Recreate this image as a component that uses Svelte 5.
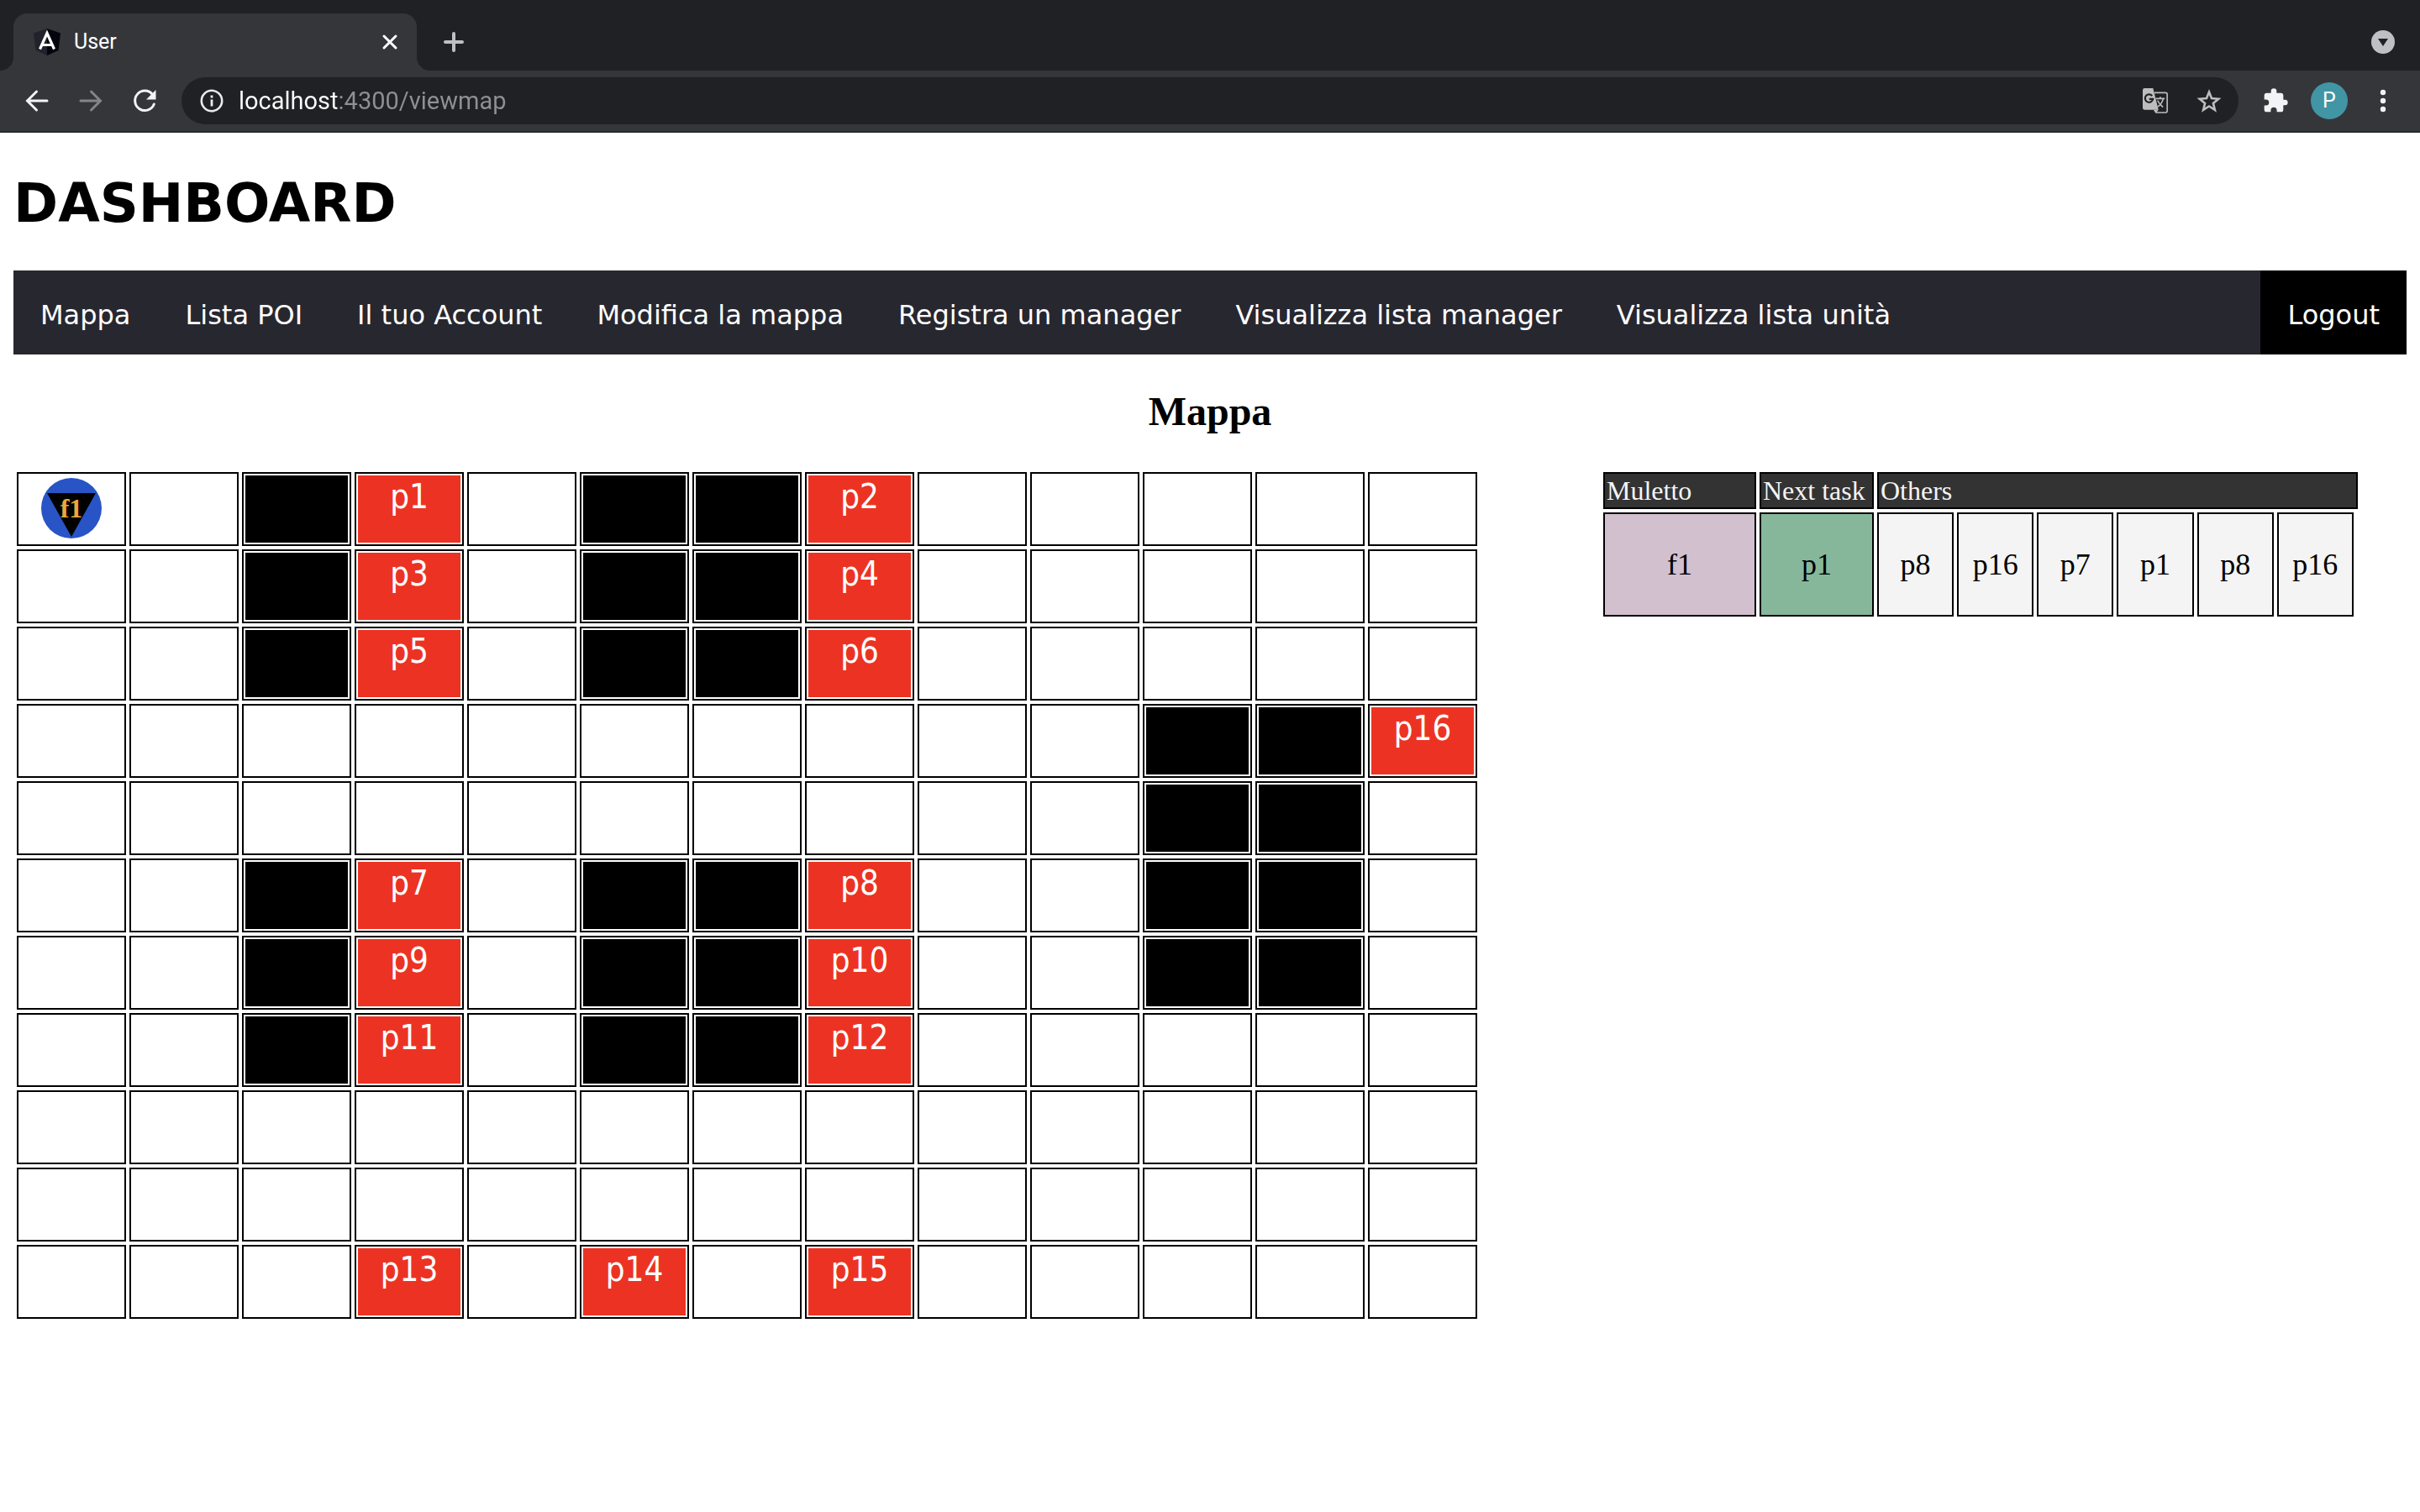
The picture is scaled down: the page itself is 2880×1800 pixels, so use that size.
<script lang="ts">
  const links = [
    'Mappa',
    'Lista POI',
    'Il tuo Account',
    'Modifica la mappa',
    'Registra un manager',
    'Visualizza lista manager',
    'Visualizza lista unità'
  ];

  // '.' free cell, '#' obstacle, '@' forklift, anything else is a POI label
  const map: string[][] = [
    '@ . # p1 . # # p2 . . . . .',
    '. . # p3 . # # p4 . . . . .',
    '. . # p5 . # # p6 . . . . .',
    '. . . . . . . . . . # # p16',
    '. . . . . . . . . . # # .',
    '. . # p7 . # # p8 . . # # .',
    '. . # p9 . # # p10 . . # # .',
    '. . # p11 . # # p12 . . . . .',
    '. . . . . . . . . . . . .',
    '. . . . . . . . . . . . .',
    '. . . p13 . p14 . p15 . . . . .'
  ].map((row) => row.split(' '));

  const others = ['p8', 'p16', 'p7', 'p1', 'p8', 'p16'];
  let address = $state('localhost:4300/viewmap');
</script>

<header class="browser">
  <div class="tabstrip">
    <div class="tab">
      <svg class="favicon" viewBox="0 0 32 32" aria-hidden="true">
        <path d="M16 0 0 5.500 2.500 26 16 32z" fill="#20232b" />
        <path d="M16 0 32 5.500 29.500 26 16 32z" fill="#02040e" />
        <path d="M7.500 24.500 16 5.500l8.500 19M10.500 19.500h11" fill="none" stroke="#fff" stroke-width="3.200" />
      </svg>
      <span class="tab-title">User</span>
      <button class="icon" aria-label="Close tab">
        <svg viewBox="0 0 20 20"><path d="m3 3 14 14M17 3 3 17" fill="none" stroke="#fff" stroke-width="3" stroke-linecap="round" /></svg>
      </button>
    </div>
    <button class="icon new-tab" aria-label="New tab">
      <svg viewBox="0 0 24 24"><path d="M12 2v20M2 12h20" fill="none" stroke="#bdc1c6" stroke-width="4" stroke-linecap="round" /></svg>
    </button>
    <button class="icon tab-search" aria-label="Search tabs">
      <svg viewBox="0 0 28 28"><circle cx="14" cy="14" r="14" fill="#bdc1c6" /><path d="M8 10h12l-6 9z" fill="#202124" /></svg>
    </button>
  </div>
  <div class="toolbar">
    <div class="history">
      <button class="icon" aria-label="Back">
        <svg viewBox="0 0 32 32"><path d="M28 16H5M15.500 5 4.500 16l11 11" fill="none" stroke="#f1f3f4" stroke-width="3" stroke-linecap="round" /></svg>
      </button>
      <button class="icon" aria-label="Forward">
        <svg viewBox="0 0 32 32"><path d="M4 16h23M16.500 5l11 11-11 11" fill="none" stroke="#848589" stroke-width="3" stroke-linecap="round" /></svg>
      </button>
      <button class="icon" aria-label="Reload">
        <svg viewBox="0 0 32 32"><path d="M25.500 8.500A11.700 11.700 0 1 0 27.300 20" fill="none" stroke="#f1f3f4" stroke-width="3" stroke-linecap="round" /><path d="M29.500 3v11.500H18z" fill="#f1f3f4" /></svg>
      </button>
    </div>
    <div class="omnibox">
      <svg class="info" viewBox="0 0 28 28" aria-hidden="true"><circle cx="14" cy="14" r="12.200" fill="none" stroke="#e8eaed" stroke-width="2.600" /><path d="M14 12.500v8M14 7.500v3" stroke="#e8eaed" stroke-width="2.800" /></svg>
      <input class="address" type="text" aria-label="Address" bind:value={address} spellcheck="false" />
      <button class="icon" aria-label="Translate this page">
        <svg viewBox="0 0 28 28">
          <path d="M13 5h12.500q1.700 0 1.700 1.700v18.600q0 1.700-1.700 1.700H15" fill="none" stroke="#bdbdbd" stroke-width="1.500" />
          <path d="M2 0h9.500l6 24H2q-2 0-2-2V2q0-2 2-2z" fill="#bdbdbd" />
          <path d="m12 24 2.500 4 3-4z" fill="#bdbdbd" />
          <path d="M10.500 8.500A4.400 4.400 0 1 0 11.400 12H7.200" fill="none" stroke="#202124" stroke-width="2" />
          <path d="M14.500 11.500h10M19.500 9.500v2M22.800 11.500q-1.500 6-6 9M16.500 13.500q2 4.500 6 7.500" fill="none" stroke="#bdbdbd" stroke-width="1.500" />
        </svg>
      </button>
      <button class="icon" aria-label="Bookmark this page">
        <svg viewBox="0 0 30 30"><path d="m15 4.500 3 7.600 8.200.6-6.300 5.200 2 8-6.900-4.400-6.900 4.400 2-8-6.300-5.200 8.200-.6z" fill="none" stroke="#bdbdbd" stroke-width="2.600" /></svg>
      </button>
    </div>
    <div class="actions">
      <button class="icon" aria-label="Extensions">
        <svg viewBox="0 0 24 24"><path d="M20.500 11H19V7c0-1.100-.9-2-2-2h-4V3.500a2.500 2.500 0 0 0-5 0V5H4c-1.100 0-2 .9-2 2v3.800h1.500a2.700 2.700 0 0 1 0 5.400H2V20c0 1.100.9 2 2 2h3.800v-1.500a2.700 2.700 0 0 1 5.400 0V22H17c1.100 0 2-.9 2-2v-4h1.500a2.500 2.500 0 0 0 0-5z" fill="#f1f3f4" /></svg>
      </button>
      <button class="avatar" aria-label="Profile">P</button>
      <button class="icon" aria-label="Menu">
        <svg viewBox="0 0 32 32" fill="#f1f3f4"><circle cx="16" cy="6" r="3.200" /><circle cx="16" cy="16" r="3.200" /><circle cx="16" cy="26" r="3.200" /></svg>
      </button>
    </div>
  </div>
</header>

<main>
  <h1>DASHBOARD</h1>
  <nav>
    {#each links as link}
      <a href="#top">{link}</a>
    {/each}
    <a class="logout" href="#logout">Logout</a>
  </nav>

  <h2>Mappa</h2>

  <div class="content">
    <table class="map" aria-label="Mappa">
      <tbody>
        {#each map as row}
          <tr>
            {#each row as cell}
              <td>
                {#if cell === '#'}
                  <div class="block"></div>
                {:else if cell === '@'}
                  <svg class="unit" viewBox="0 0 74 74">
                    <circle cx="37" cy="36" r="36" fill="#2854c5" />
                    <path d="M8 18h58L37 70z" fill="#000" />
                    <text x="37" y="47" text-anchor="middle">f1</text>
                  </svg>
                {:else if cell !== '.'}
                  <div class="poi">{cell}</div>
                {/if}
              </td>
            {/each}
          </tr>
        {/each}
      </tbody>
    </table>

    <table class="tasks">
      <colgroup>
        <col class="unit-col" />
        <col class="next-col" />
        {#each others as _}<col />{/each}
        <col class="end-col" />
      </colgroup>
      <thead>
        <tr>
          <th scope="col">Muletto</th>
          <th scope="col">Next task</th>
          <th scope="colgroup" colspan="7">Others</th>
        </tr>
      </thead>
      <tbody>
        <tr>
          <td class="name">f1</td>
          <td class="next">p1</td>
          {#each others as task}
            <td>{task}</td>
          {/each}
        </tr>
      </tbody>
    </table>
  </div>
</main>

<style>
  :global(body) {
    margin: 0;
    background: #fff;
  }

  button {
    padding: 0;
    border: 0;
    background: none;
    cursor: pointer;
  }

  .browser {
    font-family: Roboto, 'Liberation Sans', sans-serif;
    background: #202124;
    border-bottom: 2px solid #28292c;
  }

  .tabstrip {
    display: flex;
    align-items: center;
    padding: 16px 28px 0 16px;
  }

  .tab {
    position: relative;
    display: flex;
    align-items: center;
    box-sizing: border-box;
    width: 480px;
    height: 68px;
    padding: 0 22px 0 24px;
    background: #35363a;
    border-radius: 16px 16px 0 0;
  }

  .tab::before,
  .tab::after {
    content: '';
    position: absolute;
    bottom: 0;
    width: 16px;
    height: 16px;
  }

  .tab::before {
    right: 100%;
    background: radial-gradient(circle at 0 0, #202124 16px, #35363a 16px);
  }

  .tab::after {
    left: 100%;
    background: radial-gradient(circle at 100% 0, #202124 16px, #35363a 16px);
  }

  .favicon {
    width: 32px;
    height: 32px;
  }

  .tab-title {
    flex: 1;
    margin-left: 16px;
    font-size: 25px;
    line-height: 32px;
    color: #fff;
  }

  .icon svg {
    display: block;
    width: 32px;
    height: 32px;
  }

  .tab .icon svg {
    width: 20px;
    height: 20px;
  }

  .new-tab {
    margin-left: 32px;
  }

  .new-tab svg {
    width: 24px;
    height: 24px;
  }

  .tab-search {
    margin-left: auto;
    margin-right: 2px;
  }

  .tab-search svg {
    width: 28px;
    height: 28px;
  }

  .toolbar {
    display: flex;
    align-items: center;
    height: 72px;
    padding: 0 28px;
    background: #35363a;
  }

  .history {
    display: flex;
    gap: 32px;
    margin-right: 28px;
  }

  .omnibox {
    flex: 1;
    display: flex;
    align-items: center;
    gap: 34px;
    height: 56px;
    padding: 0 20px 0 22px;
    background: #202124;
    border-radius: 28px;
  }

  .info {
    width: 28px;
    height: 28px;
    margin-right: -16px;
  }

  /* the host part of the address is lighter than the port and path */
  .address {
    flex: 1;
    min-width: 0;
    padding: 0;
    border: 0;
    outline: 0;
    font: 29px/36px Roboto, 'Liberation Sans', sans-serif;
    color: transparent;
    caret-color: #fff;
    background: linear-gradient(90deg, #fff 120px, #8f9094 120px);
    background-clip: text;
  }

  .omnibox .icon svg {
    width: 30px;
    height: 30px;
  }

  .actions {
    display: flex;
    align-items: center;
    gap: 26px;
    margin-left: 28px;
  }

  .avatar {
    width: 44px;
    height: 44px;
    border-radius: 50%;
    background: #4195a5;
    color: #fff;
    font: 25px/44px Roboto, 'Liberation Sans', sans-serif;
  }

  main {
    padding: 44px 16px 16px;
  }

  h1 {
    margin: 0 0 40px;
    font: bold 64px/80px 'DejaVu Sans', sans-serif;
  }

  nav {
    display: flex;
    gap: 1px;
    background: #272730;
  }

  nav a {
    padding: 32px 32px 26px;
    font: 32px/42px 'DejaVu Sans', sans-serif;
    color: #fff;
    text-decoration: none;
    white-space: nowrap;
  }

  nav .logout {
    margin-left: auto;
    background: #000;
  }

  h2 {
    margin: 40px 0;
    font: bold 48px/56px 'Liberation Serif', serif;
    text-align: center;
  }

  .content {
    display: grid;
    grid-template-columns: 1746fr 906fr;
    gap: 142px;
    align-items: start;
    padding-right: 54px;
  }

  table {
    width: 100%;
    table-layout: fixed;
    border-collapse: separate;
    border-spacing: 4px;
  }

  td,
  th {
    box-sizing: border-box;
    padding: 2px;
    border: 2px solid #000;
  }

  .map td {
    height: 88px;
  }

  .block,
  .poi {
    height: 80px;
  }

  .block {
    background: #000;
  }

  .poi {
    background: #ec3323;
    color: #fff;
    font: 40px/50px 'DejaVu Sans Condensed', 'Noto Sans', sans-serif;
    text-align: center;
  }

  .unit {
    display: block;
    width: 74px;
    height: 74px;
    margin: 0 auto;
  }

  .unit text {
    font: bold 32px 'Liberation Serif', serif;
    fill: #f0a63c;
  }

  .tasks {
    font-family: 'Liberation Serif', serif;
  }

  .tasks th {
    background: #333;
    color: #f4f4f4;
    font-size: 32px;
    font-weight: normal;
    line-height: 36px;
    text-align: left;
  }

  .tasks td {
    height: 124px;
    background: #f4f4f4;
    font-size: 36px;
    line-height: 40px;
    text-align: center;
  }

  .tasks .name {
    background: #d2c0cf;
  }

  .tasks .next {
    background: #87b79b;
  }

  .unit-col {
    width: 182px;
  }

  .next-col {
    width: 136px;
  }

  .end-col {
    width: 1px;
  }
</style>
